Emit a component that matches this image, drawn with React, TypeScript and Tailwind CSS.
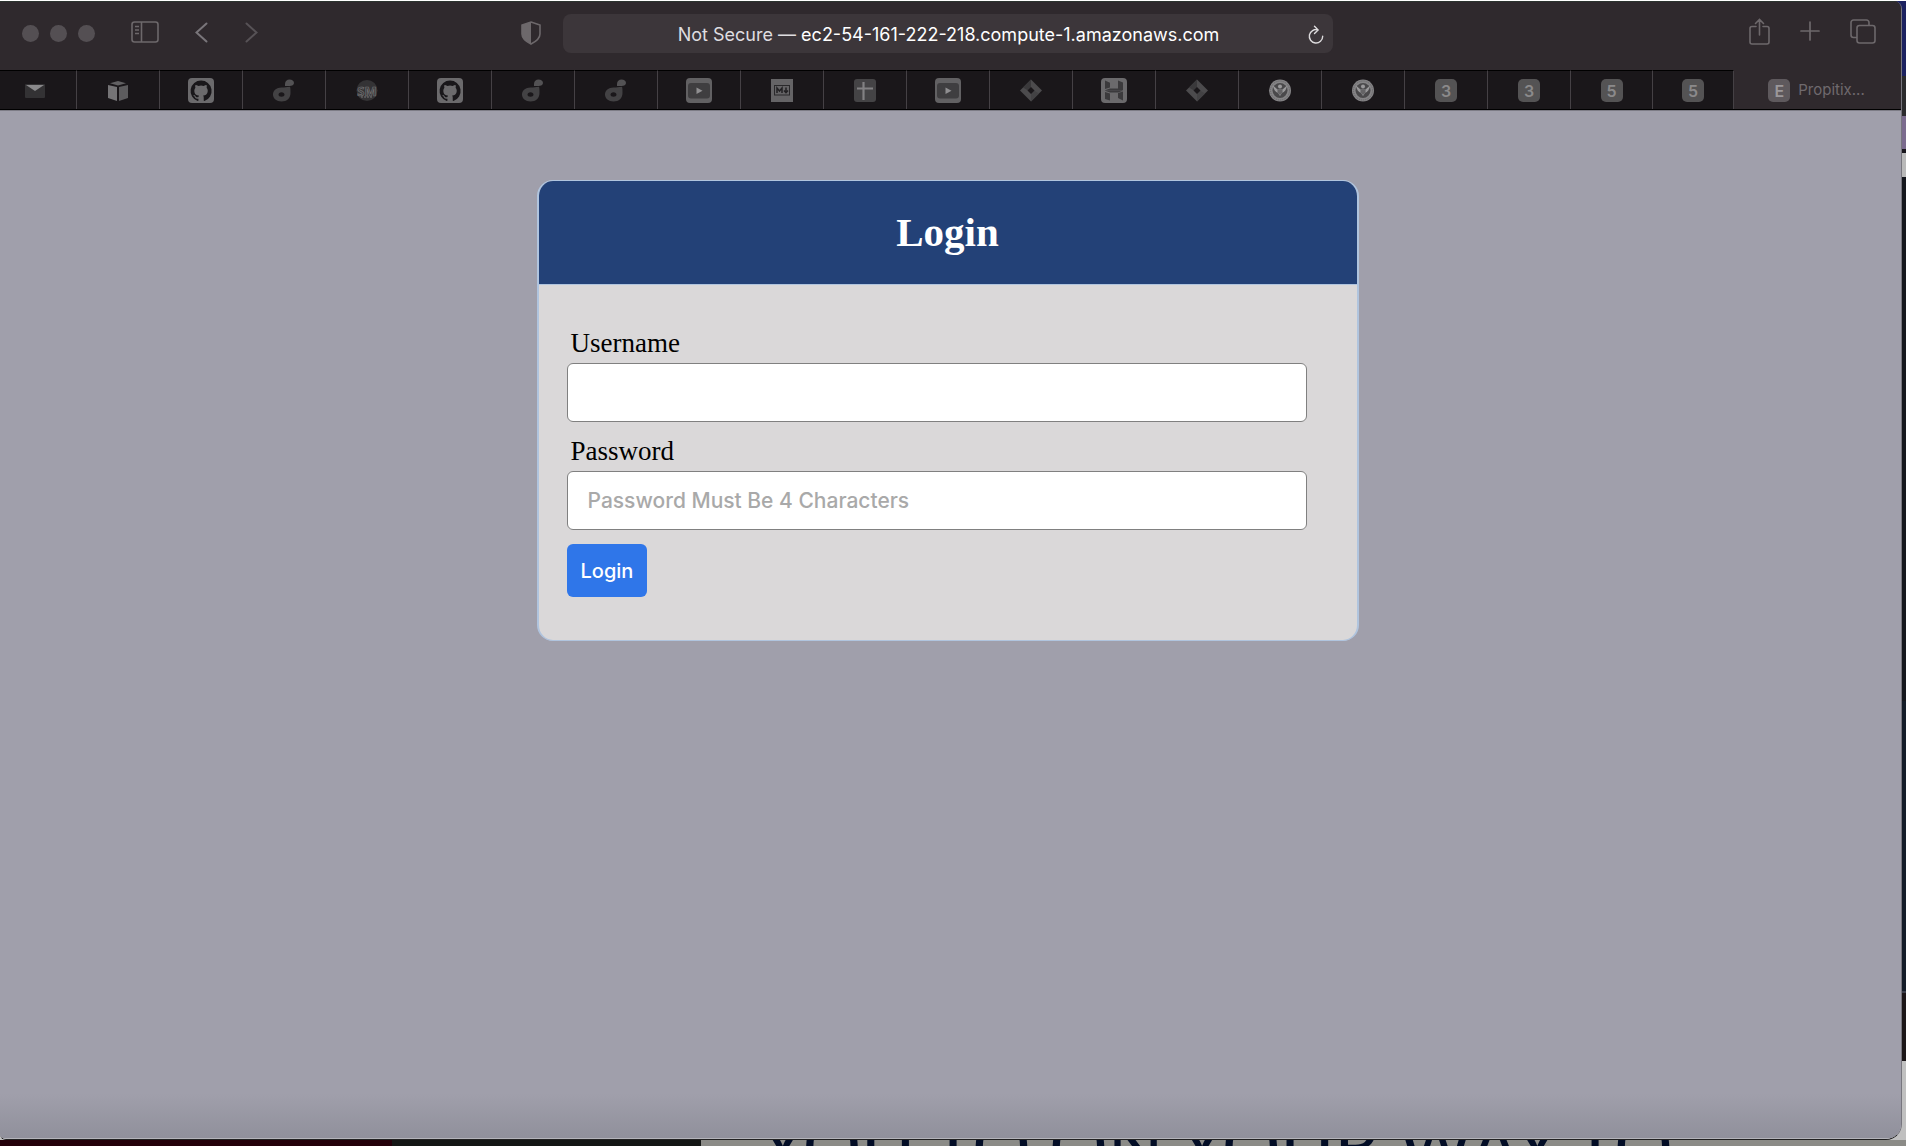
import type { ReactNode } from "react";

function Glyph({ children, size = 26 }: { children: ReactNode; size?: number }) {
  return (
    <svg width={size} height={size} viewBox="0 0 26 26" aria-hidden="true">
      {children}
    </svg>
  );
}

const Mail = () => (
  <Glyph>
    <rect x="3" y="6" width="20" height="14" rx="1" fill="#333234" />
    <path d="M4 7h18l-9 6z" fill="#8a898b" />
  </Glyph>
);

const Cube = () => (
  <Glyph>
    <path d="M13 3l8 2.200-8 2.200-8-2.200z" fill="#626163" />
    <path d="M3 7l9 2V23l-9-3z" fill="#757476" />
    <path d="M23 7l-9 2V23l9-3z" fill="#5d5c5e" />
  </Glyph>
);

const Github = () => (
  <Glyph>
    <rect width="26" height="25" rx="4" fill="#6b6a6c" />
    <g transform="translate(2.6 2.3) scale(.87)">
      <path
        fill="#19171a"
        d="M12 .3a12 12 0 0 0-3.8 23.4c.6.1.8-.3.8-.6v-2c-3.3.7-4-1.6-4-1.6-.6-1.4-1.4-1.8-1.4-1.8-1-.7.1-.7.1-.7 1.2 0 1.9 1.2 1.9 1.2 1 1.8 2.8 1.3 3.5 1 0-.8.4-1.3.7-1.6-2.7-.3-5.5-1.3-5.5-6 0-1.2.5-2.3 1.3-3.1-.2-.4-.6-1.6 0-3.2 0 0 1-.3 3.4 1.2a11.5 11.5 0 0 1 6 0c2.3-1.5 3.3-1.2 3.3-1.2.6 1.6.2 2.8.1 3.2.8.8 1.3 1.9 1.3 3.2 0 4.6-2.8 5.6-5.5 5.9.5.4.9 1 .9 2.2v3.3c0 .3.1.7.8.6A12 12 0 0 0 12 .3"
      />
    </g>
  </Glyph>
);

const Note = () => (
  <Glyph>
    <path
      fillRule="evenodd"
      fill="#434244"
      d="M10.500 9.500c3 0 5-.8 8.500-.8.500 1 .5 3 .5 6.300 0 5-3.500 8.500-9 8.500-5 0-8.500-3-8.500-7s3.500-7 8.500-7zm0 4.700c-1.800 0-3 1-3 2.300s1.200 2.300 3 2.300 3-1 3-2.300-1.200-2.300-3-2.300z"
    />
    <path d="M14 8V6c0-2.800 2-4.500 4.500-4.500S23 3 23 5c0 2-2 3-4.500 3z" fill="#535254" />
  </Glyph>
);

const Sm = () => (
  <Glyph>
    <circle cx="13" cy="12.500" r="10.500" fill="#343335" />
    <text
      x="13"
      y="17.500"
      textAnchor="middle"
      fontFamily="Open Sans, sans-serif"
      fontSize="13"
      fontWeight="700"
      fill="#39383a"
      stroke="#747375"
      strokeWidth=".7"
    >
      SM
    </text>
    <path d="M7 19h11" stroke="#777678" strokeDasharray="2 1" />
  </Glyph>
);

const Youtube = () => (
  <Glyph>
    <rect width="26" height="25" rx="4" fill="#626163" />
    <rect x="2" y="5" width="22" height="15.500" rx="3" fill="#3f3e40" />
    <path d="M10.500 9.500v6.500l6-3.250z" fill="#908f91" />
  </Glyph>
);

const Markdown = () => (
  <Glyph>
    <rect x="2" y="1" width="22" height="23" fill="#656466" />
    <rect x="5.500" y="7.500" width="15" height="9.500" fill="none" stroke="#2a292b" />
    <path
      d="M8 15v-5l2.500 3 2.500-3v5M17 9.500v5M15 12.500l2 2.200 2-2.200"
      fill="none"
      stroke="#222123"
      strokeWidth="1.500"
    />
  </Glyph>
);

const Sheet = () => (
  <Glyph>
    <rect x="2" y="1" width="22" height="23" rx="3" fill="#444345" />
    <path d="M5 10.500h16M11.500 4v18" stroke="#828183" strokeWidth="2.200" />
  </Glyph>
);

const Diamond = () => (
  <Glyph>
    <path d="M13 1.500L2 12.500l11 11 11-11z" fill="#4c4b4d" />
    <path d="M13 1.500v8l-3 3-5-3z" fill="#3a393b" />
    <path d="M13 23.500v-8l3-3 5 3z" fill="#434244" />
    <path d="M13 9l-3.500 3.500L13 16l3.500-3.500z" fill="#1a171a" />
  </Glyph>
);

const Blocks = () => (
  <Glyph>
    <rect width="26" height="25" rx="4" fill="#6b6a6c" />
    <path
      d="M4 2.500l5 2.300v4.700L4 11zM17 2.500l5 2v7.500h-5zM4 12.200l5-1.700h8l5 2H4zM22 12.800l-5 1.700H9l-5-1.700zM4 14l5 1.500v7L4 21zM17 15l5-1.500v9l-5-2.500z"
      fill="#3b3a3c"
    />
  </Glyph>
);

const Seal = () => (
  <Glyph>
    <circle cx="13" cy="12.500" r="11" fill="#858486" />
    <circle cx="13" cy="12.500" r="9.500" fill="none" stroke="#656466" strokeDasharray="1 1" />
    <circle cx="13" cy="12.500" r="7.500" fill="#4a494b" />
    <path d="M6 7.500c.5 4 2.500 6.500 5 7.500l2 3 2-3c2.500-1 4.500-3.500 5-7.500l-4.500 4h-5z" fill="#99989a" />
    <path d="M10.500 11.500h5v3L13 17l-2.500-2.500z" fill="#656466" />
    <circle cx="13" cy="8.500" r="2" fill="#9a999b" />
  </Glyph>
);

function Letter({ children, active = false }: { children: string; active?: boolean }) {
  return (
    <span
      className={
        "flex h-[23px] w-[22px] items-center justify-center rounded-[5px] text-base font-semibold " +
        (active ? "bg-[#5e595d] text-[#9b979a]" : "bg-[#545354] text-[#8b8a8b]")
      }
    >
      {children}
    </span>
  );
}

const tabs: { label: string; icon: ReactNode }[] = [
  { label: "Mail", icon: <Mail /> },
  { label: "Packages", icon: <Cube /> },
  { label: "Repository", icon: <Github /> },
  { label: "Notes", icon: <Note /> },
  { label: "SM", icon: <Sm /> },
  { label: "Repository", icon: <Github /> },
  { label: "Notes", icon: <Note /> },
  { label: "Notes", icon: <Note /> },
  { label: "Video", icon: <Youtube /> },
  { label: "Markdown", icon: <Markdown /> },
  { label: "Spreadsheet", icon: <Sheet /> },
  { label: "Video", icon: <Youtube /> },
  { label: "Board", icon: <Diamond /> },
  { label: "Blocks", icon: <Blocks /> },
  { label: "Board", icon: <Diamond /> },
  { label: "Department", icon: <Seal /> },
  { label: "Department", icon: <Seal /> },
  { label: "Tab 3", icon: <Letter>3</Letter> },
  { label: "Tab 3", icon: <Letter>3</Letter> },
  { label: "Tab 5", icon: <Letter>5</Letter> },
  { label: "Tab 5", icon: <Letter>5</Letter> },
];

function Toolbar() {
  return (
    <header className="grid h-[69px] grid-cols-[1fr_minmax(0,770px)_1fr] border-t border-[#2c332f] bg-[#2f292d] pr-1.5 pb-4">
      <div className="flex items-center justify-between pl-[22px]">
        <div className="flex items-center text-[#6d686b]">
          <div className="flex gap-[11px]">
            {["Close", "Minimize", "Zoom"].map((name) => (
              <button key={name} aria-label={name} className="mt-2.5 size-[17px] rounded-full bg-[#544f53]" />
            ))}
          </div>
          <button aria-label="Sidebar" className="mt-2 ml-9">
            <svg width="28" height="22" viewBox="0 0 28 22" fill="none" stroke="currentColor" strokeWidth="1.600">
              <rect x="1" y="1" width="26" height="20" rx="2.500" />
              <path d="M10.500 1v20M4 5.500h4M4 9h4M4 12.500h4" />
            </svg>
          </button>
          <button aria-label="Back" className="mt-2 ml-9">
            <svg width="13" height="21" viewBox="0 0 13 21" fill="none" stroke="#79757a" strokeWidth="2" strokeLinecap="round">
              <path d="M11.500 1.500L1.500 10.500l10 9" />
            </svg>
          </button>
          <button aria-label="Forward" className="mt-2 ml-[37px]">
            <svg width="13" height="21" viewBox="0 0 13 21" fill="none" stroke="#575256" strokeWidth="2" strokeLinecap="round">
              <path d="M1.500 1.500l10 9-10 9" />
            </svg>
          </button>
        </div>
        <button aria-label="Privacy report" className="mt-2.5 mr-[22px]">
          <svg width="20" height="24" viewBox="0 0 20 24">
            <path
              d="M10 1l9 3v9c0 4-4 7.500-9 10-5-2.500-9-6-9-10V4z"
              fill="none"
              stroke="#6d686b"
              strokeWidth="1.600"
            />
            <path d="M10 1v22c-5-2.500-9-6-9-10V4z" fill="#6d686b" />
          </svg>
        </button>
      </div>
      <div className="mt-3 flex h-[39px] items-center rounded-lg bg-[#3c363a] pt-0.5 pr-2 pl-7 text-lg">
        <p className="min-w-0 flex-1 truncate text-center text-white">
          <span className="text-[#dfdde0]">Not Secure — </span>ec2-54-161-222-218.compute-1.amazonaws.com
        </p>
        <button aria-label="Reload">
          <svg width="18" height="20" viewBox="0 0 18 20" fill="none" stroke="#dddbdd" strokeWidth="1.400" strokeLinecap="round">
            <path d="M11 4.900A6.700 6.700 0 1 0 15.700 11.300M7.500 1.200l3.600 3.700-3.600 3.600" />
          </svg>
        </button>
      </div>
      <div className="flex items-center justify-end gap-[30px] pt-1.5 pr-[19px] text-[#6d686b]">
        <button aria-label="Share">
          <svg width="21" height="27" viewBox="0 0 21 27" fill="none" stroke="currentColor" strokeWidth="1.600" strokeLinecap="round">
            <path d="M7 8.500H3a2 2 0 0 0-2 2V24a2 2 0 0 0 2 2h15a2 2 0 0 0 2-2V10.500a2 2 0 0 0-2-2h-4M10.500 17V1.500M6.500 5.500l4-4 4 4" />
          </svg>
        </button>
        <button aria-label="New tab">
          <svg width="20" height="20" viewBox="0 0 20 20" stroke="currentColor" strokeWidth="1.700" strokeLinecap="round">
            <path d="M10 1v18M1 10h18" />
          </svg>
        </button>
        <button aria-label="Tab overview">
          <svg width="26" height="25" viewBox="0 0 26 25" fill="none" stroke="currentColor" strokeWidth="1.600">
            <rect x="7" y="6.500" width="18" height="17.500" rx="2.500" />
            <path d="M7 18.500H3.500A2.500 2.500 0 0 1 1 16V3.500A2.500 2.500 0 0 1 3.500 1h13A2.500 2.500 0 0 1 19 3.500v3" />
          </svg>
        </button>
      </div>
    </header>
  );
}

function TabBar() {
  return (
    <nav className="flex h-10 border-b border-black bg-[#2f292d]">
      {tabs.map((tab, i) => (
        <button
          key={i}
          aria-label={tab.label}
          className="flex w-[83px] items-center justify-center border-t border-r border-t-black border-r-[#454145] bg-[#1a171a] pt-px first:w-[77px] first:pr-1.5 nth-20:w-[82px] nth-21:w-[81px]"
        >
          {tab.icon}
        </button>
      ))}
      <button className="flex min-w-0 flex-1 items-center justify-center gap-2 pt-0.5 pr-0.5 text-[15px] text-[#6f6a6e]">
        <Letter active>E</Letter>
        Propitix...
      </button>
    </nav>
  );
}

function LoginCard() {
  const field =
    "block mb-[13px] h-[59px] w-full rounded-md border border-[#808080] bg-white px-5 font-[Inter,sans-serif] text-[21px] font-medium text-black outline-none placeholder:text-[#a9a9a9]";
  const label = "block pl-1 pb-1 text-[27px] leading-8";
  return (
    <section className="w-full max-w-[822px] overflow-hidden rounded-2xl border-x-2 border-y border-[#b0c4de] bg-[#dad8d9] font-['Liberation_Serif',serif] text-black">
      <h1 className="border-b border-[#b0c4de] bg-[#234177] py-6 text-center text-[41px] leading-[55px] font-bold text-white">
        Login
      </h1>
      <form className="pt-[42px] pr-[50px] pb-[43px] pl-7" onSubmit={(e) => e.preventDefault()}>
        <label htmlFor="username" className={label}>
          Username
        </label>
        <input id="username" type="text" className={field} />
        <label htmlFor="password" className={label}>
          Password
        </label>
        <input id="password" type="password" placeholder="Password Must Be 4 Characters" className={field} />
        <button
          type="submit"
          className="mt-3.5 block h-[53px] rounded-md bg-[#2f76e9] px-3.5 font-[Inter,sans-serif] text-xl font-medium text-white"
        >
          Login
        </button>
      </form>
    </section>
  );
}

export default function App() {
  return (
    <div className="flex min-h-screen flex-col overflow-hidden border-t border-white bg-[#8b8b87] font-[Inter,sans-serif]">
      <div className="flex flex-1 flex-col bg-[linear-gradient(#1c2260_0_75px,#2b2b2d_75px_115px,#7b6b8e_115px_148px,#18161c_148px_152px,#b9b9b9_152px_176px,#15171d_176px_700px,#141c28_700px_990px,#3c3f4c_990px_992px,#1c1618_992px_1060px,#c0c0c0_1060px)] pr-1">
        <div className="flex flex-1 flex-col overflow-hidden rounded-tr-lg rounded-br-2xl rounded-bl-md border-r border-b border-r-[#77767e] border-b-[#222]">
          <Toolbar />
          <TabBar />
          <main className="flex flex-1 flex-col items-center border-t border-b border-t-[#7d7c86] border-b-[#b4b4ba] bg-[#a09fab] bg-[linear-gradient(to_top,#90909b,#a09fab_44px)] px-4 pt-[69px] pr-[22px]">
            <LoginCard />
          </main>
        </div>
      </div>
      <div
        aria-hidden="true"
        className="flex h-1.5 overflow-hidden bg-[linear-gradient(90deg,#24000a_0_392px,#141615_392px_701px,#8b8b87_701px)] pl-[760px]"
      >
        <p className="-mt-8 h-[72px] font-[Lato,sans-serif] text-[73px] leading-[72px] whitespace-nowrap text-[#020d26]">
          YOU TO ON YOUR WAY TO
        </p>
      </div>
    </div>
  );
}
